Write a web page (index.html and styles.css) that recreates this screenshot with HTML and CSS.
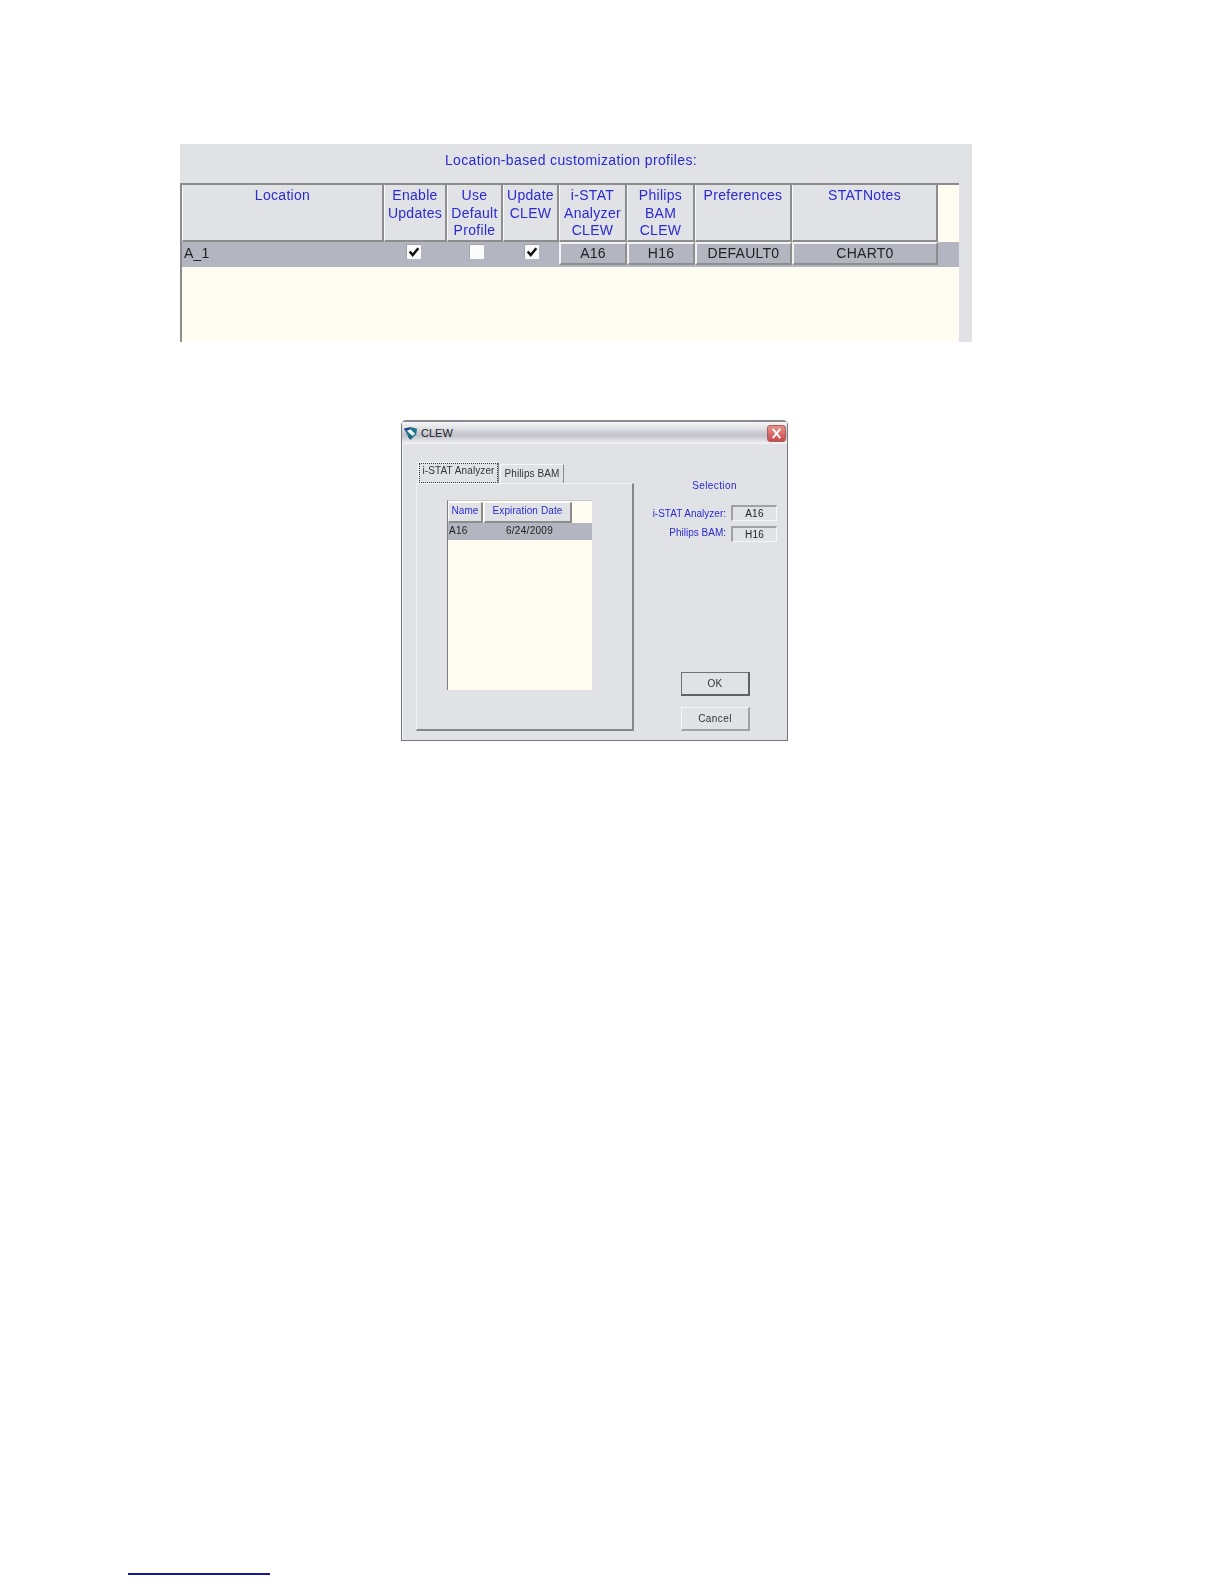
FILE: index.html
```html
<!DOCTYPE html>
<html lang="en">
<head>
<meta charset="utf-8">
<title>CLEW customization</title>
<link rel="stylesheet" href="styles.css">
</head>
<body>
<section class="profiles">
  <h2 class="profiles-title">Location-based customization profiles:</h2>
  <div class="ptable">
    <div class="prow phead">
      <div class="hcell c-loc">Location</div>
      <div class="hcell c-en">Enable<br>Updates</div>
      <div class="hcell c-def">Use<br>Default<br>Profile</div>
      <div class="hcell c-upd">Update<br>CLEW</div>
      <div class="hcell c-ist">i-STAT<br>Analyzer<br>CLEW</div>
      <div class="hcell c-phi">Philips<br>BAM<br>CLEW</div>
      <div class="hcell c-pre">Preferences</div>
      <div class="hcell c-not">STATNotes</div>
    </div>
    <div class="prow pdata">
      <div class="dcell c-loc left">A_1</div>
      <div class="dcell c-en"><span class="check on"><svg viewBox="0 0 13 13"><path d="M2.5 6 5.3 9.3 10.5 3" /></svg></span></div>
      <div class="dcell c-def"><span class="check"></span></div>
      <div class="dcell c-upd"><span class="check on"><svg viewBox="0 0 13 13"><path d="M2.5 6 5.3 9.3 10.5 3" /></svg></span></div>
      <div class="dcell c-ist box">A16</div>
      <div class="dcell c-phi box">H16</div>
      <div class="dcell c-pre box">DEFAULT0</div>
      <div class="dcell c-not box">CHART0</div>
    </div>
  </div>
</section>

<section class="dialog">
  <header class="titlebar">
    <svg class="appicon" viewBox="0 0 16 16"><path d="M1 3 8 1l7 2-1 6-6 6-3-5z" fill="#1f7488"/><path d="M1 3 6 1.500l3 3-4 2z" fill="#27408f"/><path d="M4 5 8 3.500l5 5-3 2z" fill="#eef5f8"/><path d="M5 10l3 1.500-1 2.500z" fill="#0f5566"/></svg>
    <span class="titletext">CLEW</span>
    <span class="close"><svg viewBox="0 0 18 16"><path d="M5 3 13 13M13 3 5 13"/></svg></span>
  </header>
  <div class="dbody">
    <div class="tabs-col">
      <div class="tabstrip">
        <div class="tab active"><span class="tablabel">i-STAT Analyzer</span></div>
        <div class="tab">Philips BAM</div>
      </div>
      <div class="tabpanel">
        <div class="clew-table">
          <div class="clew-head">
            <div class="chead c-name">Name</div>
            <div class="chead c-exp">Expiration Date</div>
          </div>
          <div class="clew-row">
            <span class="c-name">A16</span>
            <span class="c-exp">6/24/2009</span>
          </div>
        </div>
      </div>
    </div>
    <div class="side">
      <div class="sel-title">Selection</div>
      <div class="sel-row"><span class="sel-label">i-STAT Analyzer:</span><span class="sel-value">A16</span></div>
      <div class="sel-row"><span class="sel-label">Philips BAM:</span><span class="sel-value">H16</span></div>
      <div class="buttons">
        <button class="btn default">OK</button>
        <button class="btn">Cancel</button>
      </div>
    </div>
  </div>
</section>

<div class="footrule"></div>
</body>
</html>
```

FILE: styles.css
```css
* { box-sizing: border-box; }
html, body { margin: 0; padding: 0; background: #fff; }
body {
  width: 1224px;
  height: 1584px;
  overflow: hidden;
  padding-top: 144px;
  font-family: "Liberation Sans", Arial, sans-serif;
}

/* Upper panel */
.profiles {
  width: 792px;
  height: 198px;
  margin-left: 180px;
  background: #e1e2e6;
  overflow: hidden;
  filter: blur(.3px);
}
.profiles-title {
  margin: 0;
  height: 39px;
  padding-top: 7px;
  text-align: center;
  font-size: 14px;
  line-height: 18px;
  font-weight: normal;
  letter-spacing: .37px;
  color: #2a2ad0;
  position: relative;
  left: -5px;
}
.ptable {
  width: 779px;
  height: 160px;
  background: #fffdf2;
  border-left: 2px solid #8d8d8d;
  border-top: 2px solid #8d8d8d;
}
.prow { display: flex; }
.phead { height: 57px; background: #fffdf2; }
.pdata { height: 25px; background: #b3b5c0; align-items: flex-start; }
.c-loc { width: 202px; }
.c-en  { width: 63px; }
.c-def { width: 56px; }
.c-upd { width: 56px; }
.c-ist { width: 68px; }
.c-phi { width: 68px; }
.c-pre { width: 97px; }
.c-not { width: 146px; }
.hcell {
  padding-top: 2px;
  background: #e1e2e6;
  border-left: 1px solid #fafafa;
  border-right: 2px solid #8d8d8d;
  border-bottom: 2px solid #8d8d8d;
  color: #2a2ad0;
  text-align: center;
  font-size: 14px;
  line-height: 17.7px;
  letter-spacing: .3px;
  white-space: nowrap;
}
.dcell {
  height: 25px;
  font-size: 14px;
  line-height: 22px;
  color: #222;
  text-align: center;
  letter-spacing: .25px;
}
.left { text-align: left; padding-left: 2px; }
.box {
  height: 23px;
  background: #b3b5c0;
  border-top: 2px solid #f2f2f2;
  border-left: 2px solid #f2f2f2;
  border-right: 2px solid #8d8d8d;
  border-bottom: 2px solid #8d8d8d;
  line-height: 19px;
}
.check {
  display: inline-block;
  width: 15px;
  height: 15px;
  margin-top: 2px;
  background: #fbfbfb;
  border-top: 1px solid #a0a0a5;
  border-left: 1px solid #a0a0a5;
  vertical-align: top;
}
.dcell.c-en .check { margin-right: 5px; }
.dcell.c-def .check { margin-left: 2px; }
.check svg { display: block; width: 14px; height: 14px; }
.check path { fill: none; stroke: #111; stroke-width: 2.3; }

/* Dialog */
.dialog {
  width: 387px;
  height: 321px;
  margin-left: 401px;
  margin-top: 78px;
  background: #e1e2e6;
  border: 1px solid #77777f;
  border-top: 2px solid #8a8a90;
  border-radius: 5px 5px 0 0;
  filter: blur(.3px);
}
.titlebar {
  height: 22px;
  display: flex;
  align-items: center;
  padding: 0 1px 0 1px;
  background: linear-gradient(#f6f6f8, #dfe0e4 30%, #bfc0c9 60%, #f4f4f6);
}
.appicon { width: 15px; height: 15px; }
.titletext {
  margin-left: 3px;
  font-size: 11px;
  color: #222;
}
.close {
  margin-left: auto;
  width: 19px;
  height: 17px;
  background: linear-gradient(#e8928a, #c8494a);
  border: 1px solid #a8605f;
  border-radius: 3px;
}
.close svg { display: block; width: 17px; height: 15px; }
.close path { fill: none; stroke: #fff; stroke-width: 2; }
.dbody { display: flex; height: 296px; padding: 18px 0 0 13px; border-left: 1px solid #f4f4f6; }
.tabs-col { flex: none; width: 218px; }
.tabstrip { display: flex; align-items: flex-end; height: 21px; padding-left: 2px; }
.tab {
  height: 19px;
  width: 64px;
  margin-left: 1px;
  background: #e1e2e6;
  border-top: 1px solid #f5f5f5;
  border-left: 1px solid #f5f5f5;
  border-right: 1px solid #8d8d8d;
  font-size: 10px;
  line-height: 17px;
  text-align: center;
  color: #333;
  letter-spacing: .1px;
}
.tab.active { height: 21px; width: 81px; margin-left: 0; }
.tablabel { display: block; border: 1px dotted #333; height: 20px; line-height: 14px; }
.tabpanel {
  height: 248px;
  padding: 16px 0 0 30px;
  border-top: 1px solid #f5f5f5;
  border-left: 1px solid #f0f0f2;
  border-right: 2px solid #85858a;
  border-bottom: 2px solid #85858a;
}
.clew-table {
  width: 145px;
  height: 190px;
  background: #fffdf2;
  border-left: 1px solid #7f7f7f;
  border-top: 1px solid #c8c8c8;
}
.clew-head { display: flex; height: 22px; padding-top: 1px; }
.chead {
  height: 21px;
  background: #e1e2e6;
  border-left: 1px solid #fafafa;
  border-top: 1px solid #fafafa;
  border-right: 2px solid #8d8d8d;
  border-bottom: 2px solid #8d8d8d;
  color: #2a2ad0;
  font-size: 10px;
  line-height: 16px;
  text-align: center;
  letter-spacing: .1px;
}
.clew-head .c-name { width: 35px; margin-right: 1px; }
.clew-head .c-exp { width: 88px; }
.clew-row {
  display: flex;
  height: 17px;
  background: #b3b5c0;
  font-size: 10px;
  line-height: 15px;
  color: #222;
  letter-spacing: .3px;
}
.clew-row .c-name { width: 37px; padding-left: 1px; }
.clew-row .c-exp { width: 89px; text-align: center; }

.side { flex: none; width: 153px; padding-top: 17px; }
.sel-title {
  padding-left: 8px;
  font-size: 10px;
  line-height: 13px;
  text-align: center;
  color: #2a2ad0;
  letter-spacing: .4px;
  margin-bottom: 13px;
}
.sel-row { display: flex; justify-content: flex-end; align-items: center; height: 16px; margin-bottom: 5px; padding-right: 10px; }
.sel-label { font-size: 10px; color: #2a2ad0; margin-right: 5px; }
.sel-row + .sel-row .sel-label { margin-bottom: 4px; }
.sel-value {
  width: 46px;
  height: 16px;
  font-size: 10px;
  line-height: 13px;
  text-align: center;
  color: #222;
  letter-spacing: .3px;
  background: #e1e2e6;
  border-top: 2px solid #a0a0a5;
  border-left: 2px solid #a0a0a5;
  border-right: 1px solid #f5f5f5;
  border-bottom: 1px solid #f5f5f5;
}
.buttons { display: flex; flex-direction: column; gap: 11px; margin-top: 130px; padding-left: 47px; }
.btn {
  width: 69px;
  height: 24px;
  padding: 0;
  background: #e1e2e6;
  border-top: 1px solid #f5f5f5;
  border-left: 1px solid #f5f5f5;
  border-right: 2px solid #a0a0a5;
  border-bottom: 2px solid #a0a0a5;
  font-family: "Liberation Sans", Arial, sans-serif;
  font-size: 10px;
  color: #333;
  letter-spacing: .4px;
}
.btn.default {
  border-top: 1px solid #707078;
  border-left: 1px solid #707078;
  border-right: 2px solid #606068;
  border-bottom: 2px solid #606068;
}

.footrule {
  width: 142px;
  height: 2px;
  margin-left: 128px;
  margin-top: 832px;
  background: #1a1a90;
}
```
